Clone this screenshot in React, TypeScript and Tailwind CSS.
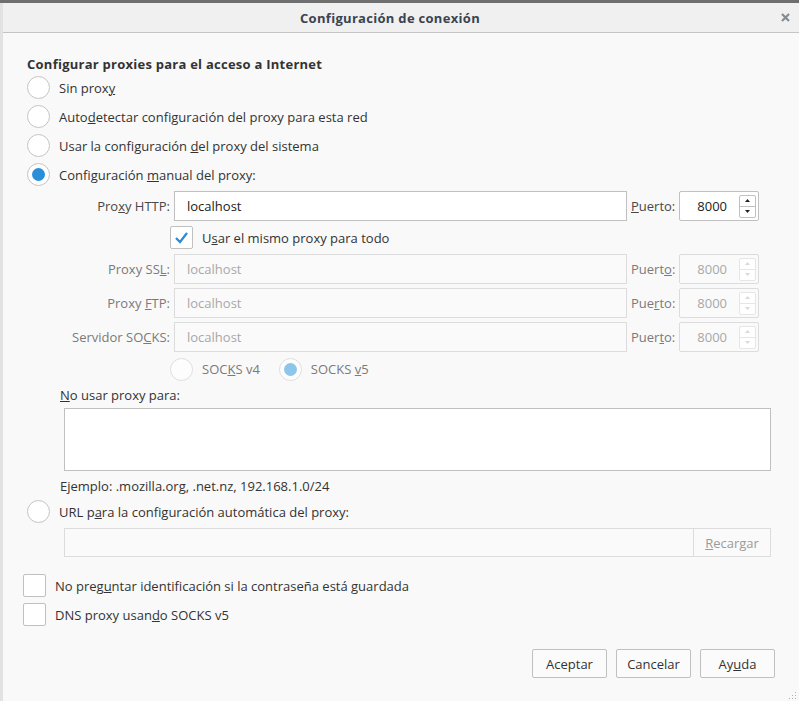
import React from "react";

const font = { fontFamily: '"Open Sans", "Noto Sans", sans-serif' };

function Radio({ checked = false, disabled = false }: { checked?: boolean; disabled?: boolean }) {
  return (
    <span
      className={`flex h-[23px] w-[23px] shrink-0 items-center justify-center rounded-full border ${
        disabled ? "border-[#dedede] bg-[#fdfdfd]" : "border-[#c4c4c4] bg-white"
      }`}
    >
      {checked && (
        <span className={`h-[13px] w-[13px] rounded-full ${disabled ? "bg-[#8cc6ea]" : "bg-[#2a8fd8]"}`} />
      )}
    </span>
  );
}

function Checkbox({ checked = false }: { checked?: boolean }) {
  return (
    <span className="flex h-[23px] w-[23px] shrink-0 items-center justify-center rounded-[2px] border border-[#c0c0c0] bg-white">
      {checked && (
        <svg width="15" height="13" viewBox="0 0 15 13">
          <polyline points="2,7 6,11 13,2" fill="none" stroke="#2a8ad6" strokeWidth="2.2" />
        </svg>
      )}
    </span>
  );
}

function Spin({ disabled = false }: { disabled?: boolean }) {
  const line = disabled ? "border-[#e6e6e6]" : "border-[#c0c0c0]";
  const arrow = disabled ? "#dadada" : "#222";
  return (
    <div className={`ml-[12px] flex h-[23px] w-[17px] shrink-0 flex-col rounded-[2px] border ${line} bg-white`}>
      <div className={`flex flex-1 items-center justify-center border-b ${line}`}>
        <svg width="5" height="3" viewBox="0 0 5 3">
          <polygon points="2.5,0 5,3 0,3" fill={arrow} />
        </svg>
      </div>
      <div className="flex flex-1 items-center justify-center">
        <svg width="5" height="3" viewBox="0 0 5 3">
          <polygon points="0,0 5,0 2.5,3" fill={arrow} />
        </svg>
      </div>
    </div>
  );
}

function ProxyRow({
  label,
  port,
  disabled = false,
}: {
  label: React.ReactNode;
  port: React.ReactNode;
  disabled?: boolean;
}) {
  const border = disabled ? "border-[#dcdcdc] bg-[#fafafa]" : "border-[#c0c0c0] bg-white";
  const labelColor = disabled ? "text-[#7a7a7a]" : "text-[#484848]";
  const valueColor = disabled ? "text-[#a8a8a8]" : "text-[#222]";
  return (
    <div className="flex h-[30px] items-center">
      <div className={`mr-[4px] w-[147px] text-right ${labelColor}`}>{label}</div>
      <div className={`flex h-[30px] w-[453px] items-center border pl-[12px] ${border} ${valueColor}`}>localhost</div>
      <div className={`ml-[4px] w-[44px] ${labelColor}`}>{port}</div>
      <div className={`ml-[4px] flex h-[30px] w-[80px] items-center justify-end rounded-[2px] border pr-[2px] ${border} ${valueColor}`}>
        <span>8000</span>
        <Spin disabled={disabled} />
      </div>
    </div>
  );
}

function Button({ children }: { children: React.ReactNode }) {
  return (
    <button className="flex h-[29px] w-[75px] items-center justify-center rounded-[2px] border border-[#c0c0c0] bg-[#fbfbfb] text-[#333]">
      {children}
    </button>
  );
}

export default function App() {
  return (
    <div className="flex h-[701px] w-[799px] flex-col overflow-hidden bg-[#6f6f6f] pt-[3px] text-[13px] leading-[18px] text-[#333]" style={font}>
      <div className="flex flex-1">
        {/* page behind the dialog */}
        <div className="w-[3px] bg-[#e2e2e2]" />

        <div className="flex flex-1 flex-col bg-[#f9f9f9]">
          {/* title bar */}
          <div className="relative flex h-[30px] items-center justify-center border-b border-[#c4c4c4] bg-[#f0f0f0] pr-[22px]">
            <span className="font-bold tracking-[0.3px] text-[#3a4450]">Configuración de conexión</span>
            <svg className="absolute right-[9px] top-[10px]" width="9" height="9" viewBox="0 0 9 9">
              <path d="M1 1 L8 8 M8 1 L1 8" stroke="#858b92" strokeWidth="2.2" />
            </svg>
          </div>

          <div className="relative flex flex-1 flex-col pl-[20px] pr-[24px] pt-[22px]">
            <div className="ml-[4px] h-[18px] font-bold tracking-[0.25px] text-[#333]">Configurar proxies para el acceso a Internet</div>

            <div className="ml-[4px] flex h-[29px] items-center gap-[9px]">
              <Radio />
              <span>
                Sin prox<u>y</u>
              </span>
            </div>
            <div className="ml-[4px] flex h-[29px] items-center gap-[9px]">
              <Radio />
              <span>
                Auto<u>d</u>etectar configuración del proxy para esta red
              </span>
            </div>
            <div className="ml-[4px] flex h-[29px] items-center gap-[9px]">
              <Radio />
              <span>
                Usar la configuración <u>d</u>el proxy del sistema
              </span>
            </div>
            <div className="ml-[4px] flex h-[29px] items-center gap-[9px]">
              <Radio checked />
              <span>
                Configuración <u>m</u>anual del proxy:
              </span>
            </div>

            <div className="mt-[2px]">
              <ProxyRow
                label={
                  <>
                    Pro<u>x</u>y HTTP:
                  </>
                }
                port={
                  <>
                    <u>P</u>uerto:
                  </>
                }
              />
            </div>

            <div className="flex h-[33px] items-center gap-[9px] pl-[147px]">
              <Checkbox checked />
              <span>
                U<u>s</u>ar el mismo proxy para todo
              </span>
            </div>

            <ProxyRow
              disabled
              label={
                <>
                  Proxy SS<u>L</u>:
                </>
              }
              port={
                <>
                  Puert<u>o</u>:
                </>
              }
            />
            <div className="mt-[4px]">
              <ProxyRow
                disabled
                label={
                  <>
                    Proxy <u>F</u>TP:
                  </>
                }
                port={
                  <>
                    Pue<u>r</u>to:
                  </>
                }
              />
            </div>
            <div className="mt-[4px]">
              <ProxyRow
                disabled
                label={
                  <>
                    Servidor SO<u>C</u>KS:
                  </>
                }
                port={
                  <>
                    Puer<u>t</u>o:
                  </>
                }
              />
            </div>

            <div className="flex h-[34px] items-center pl-[147px] text-[#7a7a7a]">
              <Radio disabled />
              <span className="ml-[9px]">
                SOC<u>K</u>S v4
              </span>
              <span className="ml-[19px]">
                <Radio checked disabled />
              </span>
              <span className="ml-[9px]">
                SOCKS <u>v</u>5
              </span>
            </div>

            <div className="ml-[37px] h-[18px]">
              <u>N</u>o usar proxy para:
            </div>
            <div className="ml-[41px] mt-[4px] h-[63px] w-[707px] border border-[#c0c0c0] bg-white" />

            <div className="ml-[37px] mt-[6px] h-[18px]">Ejemplo: .mozilla.org, .net.nz, 192.168.1.0/24</div>

            <div className="ml-[4px] mt-[2px] flex h-[29px] items-center gap-[9px]">
              <Radio />
              <span>
                URL p<u>a</u>ra la configuración automática del proxy:
              </span>
            </div>

            <div className="ml-[41px] mt-[2px] flex h-[29px] w-[707px] border border-[#dcdcdc] bg-[#fafafa]">
              <div className="flex-1" />
              <div className="flex w-[77px] items-center justify-center border-l border-[#dcdcdc] text-[#9a9a9a]">
                <span>
                  <u>R</u>ecargar
                </span>
              </div>
            </div>

            <div className="mt-[14px] flex h-[29px] items-center gap-[9px]">
              <Checkbox />
              <span>
                No preg<u>u</u>ntar identificación si la contraseña está guardada
              </span>
            </div>
            <div className="flex h-[29px] items-center gap-[9px]">
              <Checkbox />
              <span>
                DNS proxy usan<u>d</u>o SOCKS v5
              </span>
            </div>

            <div className="mt-[20px] flex justify-end gap-[9px]">
              <Button>Aceptar</Button>
              <Button>Cancelar</Button>
              <Button>
                <span>
                  Ay<u>u</u>da
                </span>
              </Button>
            </div>

            {/* resize grip */}
            <svg className="absolute bottom-[1px] right-[2px]" width="8" height="8" viewBox="0 0 8 8">
              <rect x="6" y="0" width="1" height="1" fill="#b0b0b0" />
              <rect x="3" y="3" width="1" height="1" fill="#b0b0b0" />
              <rect x="6" y="3" width="1" height="1" fill="#b0b0b0" />
              <rect x="0" y="6" width="1" height="1" fill="#b0b0b0" />
              <rect x="3" y="6" width="1" height="1" fill="#b0b0b0" />
              <rect x="6" y="6" width="1" height="1" fill="#b0b0b0" />
            </svg>
          </div>
        </div>
      </div>
    </div>
  );
}
